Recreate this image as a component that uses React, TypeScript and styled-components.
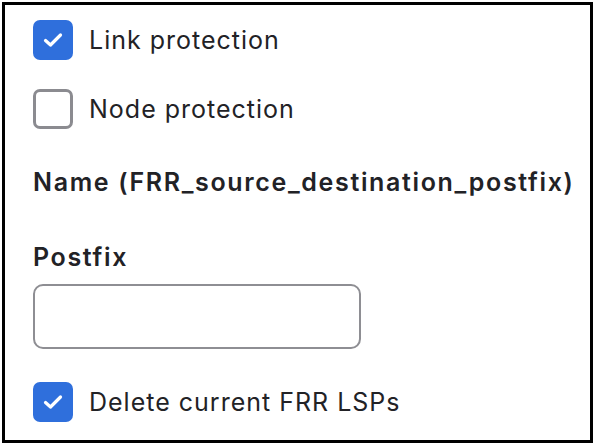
import React from 'react';
import styled, { createGlobalStyle } from 'styled-components';

const Global = createGlobalStyle`
    html, body {
        margin: 0;
        padding: 0;
        background: #fff;
    }
    body {
        font-family: Inter, "Liberation Sans", Arial, sans-serif;
        color: #222226;
    }
`;

const Frame = styled.div`
    box-sizing: border-box;
    width: 591px;
    height: 441px;
    margin: 2px 0 0 2px;
    border: 3px solid #000;
    padding: 14px 0 0 28px;
    display: flex;
    flex-direction: column;
`;

const CheckRow = styled.label<{ $mt?: number }>`
    display: flex;
    align-items: center;
    gap: 16px;
    height: 40px;
    margin-top: ${p => p.$mt ?? 0}px;
    font-size: 25px;
    font-weight: 400;
    letter-spacing: 1px;
    padding-top: 1px;
`;

const Box = styled.span<{ $checked: boolean }>`
    box-sizing: border-box;
    width: 40px;
    height: 40px;
    flex: none;
    border-radius: 7px;
    display: flex;
    align-items: center;
    justify-content: center;
    background: ${p => (p.$checked ? '#2f6fdc' : '#fff')};
    border: ${p => (p.$checked ? 'none' : '3px solid #8b8b90')};
`;

const Label = styled.div<{ $mt: number }>`
    margin-top: ${p => p.$mt}px;
    font-size: 25px;
    font-weight: 600;
    line-height: 30px;
    letter-spacing: 1.65px;
`;

const Input = styled.input`
    box-sizing: border-box;
    width: 328px;
    height: 65px;
    margin-top: 12px;
    border: 2.5px solid #8e8e93;
    border-radius: 10px;
    background: #fff;
    outline: none;
`;

const Check = () => (
    <svg width="20" height="16" viewBox="0 0 20 16">
        <path d="M2.5 8.5 L7.5 13 L17.5 3" fill="none" stroke="#fff" strokeWidth="3.2" strokeLinecap="round" strokeLinejoin="round" />
    </svg>
);

const Checkbox = ({ checked, text, mt }: { checked: boolean; text: string; mt?: number }) => (
    <CheckRow $mt={mt}>
        <Box $checked={checked}>{checked && <Check />}</Box>
        <span>{text}</span>
    </CheckRow>
);

const App = () => (
    <>
        <Global />
        <Frame>
            <Checkbox checked text="Link protection" />
            <Checkbox checked={false} text="Node protection" mt={28} />
            <Label $mt={38}>Name (FRR_source_destination_postfix)</Label>
            <Label $mt={45}>Postfix</Label>
            <Input />
            <Checkbox checked text="Delete current FRR LSPs" mt={32} />
        </Frame>
    </>
);

export default App;
